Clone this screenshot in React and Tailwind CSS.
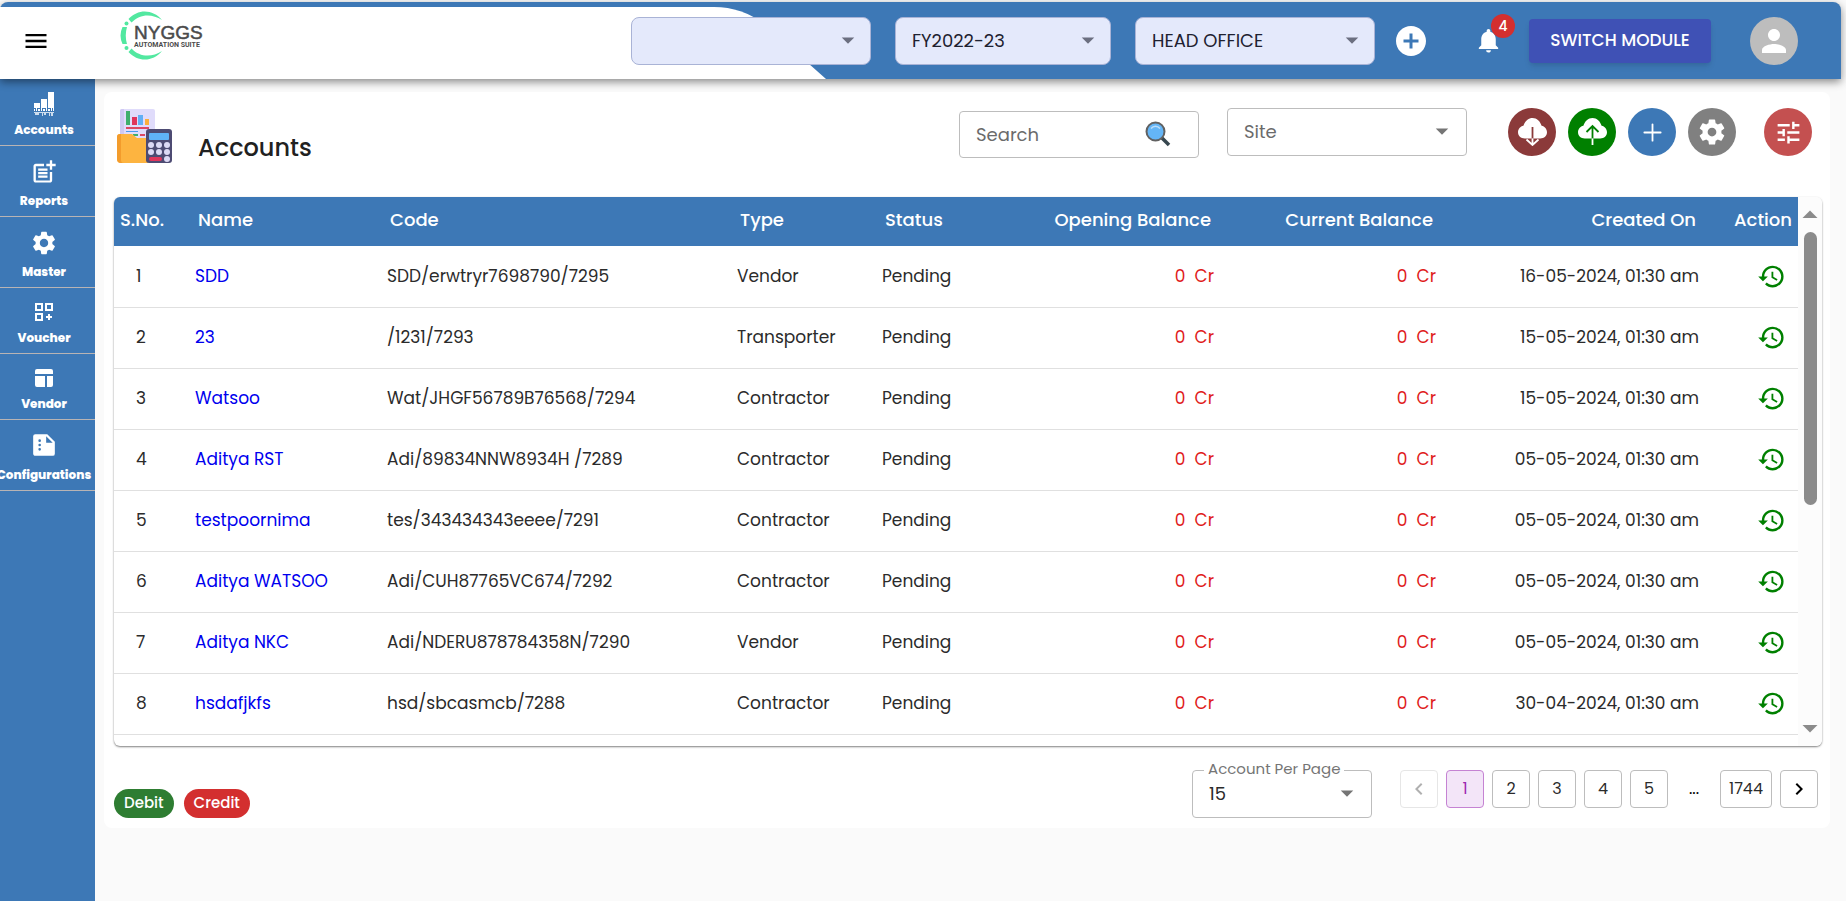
import { useState } from 'react';
import {
  MdMenu,
  MdPostAdd,
  MdSettings,
  MdAddCircle,
  MdNotifications,
  MdPerson,
  MdTune,
  MdHistory,
  MdNavigateBefore,
  MdNavigateNext,
  MdArrowDropDown,
  MdArrowDropUp,
} from 'react-icons/md';
import { IoAdd, IoSettingsSharp } from 'react-icons/io5';

const accounts = [
  { name: 'SDD', code: 'SDD/erwtryr7698790/7295', type: 'Vendor', createdOn: '16-05-2024, 01:30 am' },
  { name: '23', code: '/1231/7293', type: 'Transporter', createdOn: '15-05-2024, 01:30 am' },
  { name: 'Watsoo', code: 'Wat/JHGF56789B76568/7294', type: 'Contractor', createdOn: '15-05-2024, 01:30 am' },
  { name: 'Aditya RST', code: 'Adi/89834NNW8934H /7289', type: 'Contractor', createdOn: '05-05-2024, 01:30 am' },
  { name: 'testpoornima', code: 'tes/343434343eeee/7291', type: 'Contractor', createdOn: '05-05-2024, 01:30 am' },
  { name: 'Aditya WATSOO', code: 'Adi/CUH87765VC674/7292', type: 'Contractor', createdOn: '05-05-2024, 01:30 am' },
  { name: 'Aditya NKC', code: 'Adi/NDERU878784358N/7290', type: 'Vendor', createdOn: '05-05-2024, 01:30 am' },
  { name: 'hsdafjkfs', code: 'hsd/sbcasmcb/7288', type: 'Contractor', createdOn: '30-04-2024, 01:30 am' },
];

// Sidebar icons
const BarsIcon = () => (
  <svg width="24" height="26" viewBox="0 0 24 26" fill="currentColor" aria-hidden="true">
    <path d="M2 12h6v5H2zM9 8h6v9H9zM16 1h6v16h-6z" />
    <path d="M2 18h1v2H2zM4 17h1v3H4zM6 18h2v2H6zM9 17h1v3H9zM11 18h2v2h-2zM14 17h1v3h-1zM16 18h2v2h-2zM19 17h1v3h-1zM21 17h1v3h-1z" />
    <path d="M2 21h20v1H2zM3 22h4v2H3zM10 22h1v3h-1zM12 22h2v2h-2zM17 22h1v3h-1zM19 22h2v3h-2z" opacity=".75" />
  </svg>
);

const VoucherIcon = () => (
  <svg width="24" height="24" viewBox="0 0 24 24" fill="currentColor" aria-hidden="true">
    <path fillRule="evenodd" d="M3 3h8v8H3zm2 2v4h4V5zM13 3h8v8h-8zm2 2v4h4V5zM3 13h8v8H3zm2 2v4h4v-4z" />
    <path d="M16 14h2v2h2v2h-2v2h-2v-2h-2v-2h2z" />
  </svg>
);

const VendorIcon = () => (
  <svg width="24" height="24" viewBox="0 0 24 24" fill="currentColor" aria-hidden="true">
    <path d="M5 3h14a2 2 0 0 1 2 2v3H3V5a2 2 0 0 1 2-2zM3 10h10v11H5a2 2 0 0 1-2-2zM15 10h6v9a2 2 0 0 1-2 2h-4z" />
  </svg>
);

const ConfigIcon = () => (
  <svg width="26" height="26" viewBox="0 0 24 24" fill="currentColor" aria-hidden="true">
    <path
      fillRule="evenodd"
      d="M15 2H4a2 2 0 0 0-2 2v16c0 1.1.9 2 2 2h16a2 2 0 0 0 2-2V9zM8 17.200a1.200 1.200 0 1 1 0-2.400 1.200 1.200 0 0 1 0 2.400zM8 13.200a1.200 1.200 0 1 1 0-2.400 1.200 1.200 0 0 1 0 2.400zM8 9.200a1.200 1.200 0 1 1 0-2.400 1.200 1.200 0 0 1 0 2.400zM14 10V4l6 6z"
    />
  </svg>
);

const menuItems = [
  { label: 'Accounts', icon: <BarsIcon />, height: 'h-[67px]' },
  { label: 'Reports', icon: <MdPostAdd size={28} />, height: 'h-[71px]' },
  { label: 'Master', icon: <MdSettings size={28} />, height: 'h-[71px]' },
  { label: 'Voucher', icon: <VoucherIcon />, height: 'h-[66px]' },
  { label: 'Vendor', icon: <VendorIcon />, height: 'h-[66px]' },
  { label: 'Configurations', icon: <ConfigIcon />, height: 'h-[71px]' },
];

const Logo = () => (
  <svg width="90" height="52" viewBox="0 0 90 52" role="img" aria-label="NYGGS Automation Suite">
    <g fill="#52e8a0">
      <path d="M8.500 8C18-2.500 33-2 42 9 32 2.500 20 2.500 11.500 11.500z" />
      <path d="M8.500 41C18 51.500 33 51 42 40 32 46.500 20 46.500 11.500 37.500z" />
      <path d="M2.500 16h4.500q-2.500 8.500 0 17H2.500q-4-8.500 0-17z" />
      <circle cx="6.500" cy="12.500" r="2" />
      <circle cx="6.500" cy="37" r="2" />
    </g>
    <text x="14" y="28" fontSize="19" fill="#4b4b4b" stroke="#4b4b4b" strokeWidth=".5" fontFamily="Liberation Sans, sans-serif">NYGGS</text>
    <text x="14" y="36" fontSize="7" fontWeight="700" fill="#4b4b4b" fontFamily="Roboto, sans-serif">AUTOMATION SUITE</text>
  </svg>
);

const AccountsArt = () => (
  <svg width="56" height="56" viewBox="0 0 56 56" aria-hidden="true">
    <rect x="3" y="1" width="35" height="40" rx="2" fill="#e0dcfb" />
    <path d="M3 3a2 2 0 0 1 2-2h2v26H3z" fill="#cfc9f3" />
    <path d="M9 3h4v14H9z" fill="#3fae6c" />
    <path d="M15 9h5v8h-5z" fill="#e0355c" />
    <path d="M21 7h5v10h-5z" fill="#62b0f5" />
    <path d="M28 11h4v6h-4z" fill="#fbaf3a" />
    <path d="M9 19h23v2H9z" fill="#dc4764" />
    <path d="M9 23h12v1H9z" fill="#4a9bea" />
    <path d="M16 26h5v2h-5z" fill="#3fae6c" />
    <path d="M23 26h5v2h-5z" fill="#dc4764" />
    <path d="M0 29a3 3 0 0 1 3-3h12l5 4h11v25H4a4 4 0 0 1-4-4z" fill="#fdb440" />
    <path d="M0 29a3 3 0 0 1 3-3h1v26q0 3 3 3H4a4 4 0 0 1-4-4z" fill="#f39c2c" />
    <rect x="29" y="21" width="26" height="34" rx="3" fill="#4d4b73" />
    <rect x="32" y="25" width="20" height="7" rx="1" fill="#5fb2f7" />
    <g fill="#dcd9f5">
      <circle cx="34" cy="37" r="3" />
      <circle cx="42" cy="37" r="3" />
      <circle cx="50" cy="37" r="3" />
      <circle cx="34" cy="44" r="3" />
      <circle cx="42" cy="44" r="3" />
      <circle cx="50" cy="44" r="3" />
      <circle cx="50" cy="51" r="3" />
    </g>
    <rect x="32" y="49" width="13" height="4" rx="2" fill="#e0355c" />
  </svg>
);

const SearchIcon = () => (
  <svg width="26" height="26" viewBox="0 0 26 26" aria-hidden="true">
    <path d="m17 17 7 7" stroke="#37474f" strokeWidth="3.500" />
    <circle cx="10.500" cy="10.500" r="9" fill="#64b5f6" stroke="#616161" strokeWidth="2" />
    <path d="M6 7.500c2.500-3 6.500-3 9 0" fill="none" stroke="#bbdefb" strokeWidth="1.500" />
  </svg>
);

// Cloud with an arrow, shared by the download and upload buttons
const CloudIcon = ({ up, color }) => (
  <svg width="29" height="28" viewBox="0 0 29 28" fill="none" strokeWidth="1.800" aria-hidden="true">
    <path
      d="M6.800 20.500C2.800 20.500 0 18 0 14.300 0 11 2.300 8.300 5.400 7.800 6.800 3.300 10.200 0 14.500 0s7.700 3.300 9.100 7.800C26.700 8.300 29 11 29 14.300c0 3.700-2.800 6.200-6.800 6.200z"
      fill="#fff"
    />
    {up ? (
      <>
        <path d="M14.500 20.500V8.500M8.500 14l6-6 6 6" stroke={color} />
        <path d="M14.500 20.500v6.500" stroke="#fff" />
      </>
    ) : (
      <>
        <path d="M14.500 9v11.500" stroke={color} />
        <path d="M14.500 20.500V27M8.500 21.500l6 5.500 6-5.500" stroke="#fff" />
      </>
    )}
  </svg>
);

const HeaderSelect = ({ label, value, className }) => (
  <div className={`relative h-12 ${className}`}>
    <select
      aria-label={label}
      defaultValue={value}
      className="w-full h-full pl-4 pr-10 appearance-none rounded-lg border border-[#a9b3d6] bg-[#e4e9fb] text-lg text-[#1e2130]"
    >
      <option value={value}>{value}</option>
    </select>
    <MdArrowDropDown size={30} className="absolute right-2 top-2 text-[#6b6f80] pointer-events-none" />
  </div>
);

const TopBar = ({ onToggle }) => (
  <header className="relative z-20 mr-[5px] h-[77px] mt-0.5 flex items-center rounded-t-lg bg-[#3d78b6] shadow-[0_3px_8px_rgba(0,0,0,0.45)]">
    <div className="absolute inset-x-0 bottom-0 top-[5px]">
      <svg width="828" height="72" viewBox="0 0 828 72" aria-hidden="true">
        <path d="M0 0H714Q742 0 764 17L826 72H0z" fill="#fff" />
      </svg>
    </div>
    <div className="relative flex w-full items-center">
      <button type="button" aria-label="Toggle menu" onClick={onToggle} className="ml-[22px] w-7 text-black">
        <MdMenu size={28} />
      </button>
      <a href="#home" className="ml-[70px] mb-2">
        <Logo />
      </a>
      <div className="ml-auto flex items-center">
        <HeaderSelect label="Company" value="" className="w-60 mr-6" />
        <HeaderSelect label="Financial year" value="FY2022-23" className="w-[216px] mr-6" />
        <HeaderSelect label="Office" value="HEAD OFFICE" className="w-60 mr-[18px]" />
        <button type="button" aria-label="Add" className="mr-[45px] text-white">
          <MdAddCircle size={36} />
        </button>
        <button type="button" aria-label="Notifications" className="relative mr-[26px] text-white">
          <MdNotifications size={29} />
          <span className="absolute -right-3 -top-3 flex h-6 w-6 items-center justify-center rounded-full bg-[#d32f2f] text-sm font-medium">
            4
          </span>
        </button>
        <button
          type="button"
          className="mr-[39px] h-11 w-[182px] rounded bg-[#3f51b5] text-[17px] font-medium text-white shadow-md"
        >
          SWITCH MODULE
        </button>
        <button
          type="button"
          aria-label="Profile"
          className="mr-[43px] flex h-12 w-12 items-center justify-center rounded-full bg-[#bdbdbd] text-white"
        >
          <MdPerson size={36} />
        </button>
      </div>
    </div>
  </header>
);

const Sidebar = () => (
  <nav className="w-[95px] shrink-0 bg-[#3d78b6] text-white">
    {menuItems.map((item) => (
      <a
        key={item.label}
        href={`#${item.label.toLowerCase()}`}
        className={`flex flex-col items-center justify-between border-b border-[#b9b4b4] pt-3 pb-[5px] pr-[7px] text-xs leading-5 font-extrabold ${item.height}`}
      >
        {item.icon}
        {item.label}
      </a>
    ))}
  </nav>
);

const roundButton = 'flex h-12 w-12 items-center justify-center rounded-full text-white';

const PageHeader = () => (
  <div className="flex items-start">
    <div className="ml-[3px]">
      <AccountsArt />
    </div>
    <h1 className="ml-[25px] mt-6 text-2xl font-medium text-[#212121]">Accounts</h1>
    <div className="ml-auto flex items-start">
      <div className="relative mt-[3px] mr-7 h-[47px] w-60">
        <input
          type="text"
          aria-label="Search"
          placeholder="Search"
          className="h-full w-full rounded border border-[#bdbdbd] pl-4 pr-14 text-lg placeholder:text-[#6b6b6b]"
        />
        <button type="button" aria-label="Run search" className="absolute right-7 top-2.5">
          <SearchIcon />
        </button>
      </div>
      <div className="relative mr-[41px] h-12 w-60">
        <select
          aria-label="Site"
          defaultValue=""
          className="h-full w-full appearance-none rounded border border-[#bdbdbd] bg-white pl-4 text-lg text-[#6b6b6b]"
        >
          <option value="">Site</option>
        </select>
        <MdArrowDropDown size={30} className="absolute right-2.5 top-2 text-[#757575] pointer-events-none" />
      </div>
      <div className="flex gap-3">
        <button type="button" aria-label="Download" className={`${roundButton} bg-[#8b3a3a]`}>
          <CloudIcon color="#8b3a3a" />
        </button>
        <button type="button" aria-label="Upload" className={`${roundButton} bg-[#008000]`}>
          <CloudIcon up color="#008000" />
        </button>
        <button type="button" aria-label="Add account" className={`${roundButton} bg-[#3d78b6]`}>
          <IoAdd size={29} />
        </button>
        <button type="button" aria-label="Settings" className={`${roundButton} bg-[#808080]`}>
          <IoSettingsSharp size={28} />
        </button>
      </div>
      <button type="button" aria-label="Filters" className={`${roundButton} ml-7 mr-2.5 bg-[#c45050]`}>
        <MdTune size={29} />
      </button>
    </div>
  </div>
);

const AccountsTable = () => (
  <div className="mt-[33px] flex h-[549px] overflow-hidden rounded-md shadow-[0_1px_2px_rgba(0,0,0,0.5)]">
    <div className="min-w-0 flex-1 overflow-hidden">
      <table className="w-full table-fixed text-[17px] text-[#2b2b2b]">
        <colgroup>
          <col className="w-[73px]" />
          <col className="w-48" />
          <col className="w-[350px]" />
          <col className="w-[145px]" />
          <col className="w-[130px]" />
          <col />
          <col className="w-[222px]" />
          <col className="w-[263px]" />
          <col className="w-[91px]" />
        </colgroup>
        <thead>
          <tr className="h-[49px] bg-[#3d78b6] text-left text-lg text-white *:pb-1 *:font-medium">
            <th className="pl-1.5">S.No.</th>
            <th className="pl-[11px]">Name</th>
            <th className="pl-[11px]">Code</th>
            <th className="pl-[11px]">Type</th>
            <th className="pl-[11px]">Status</th>
            <th className="pr-[11px] text-right">Opening Balance</th>
            <th className="pr-[11px] text-right">Current Balance</th>
            <th className="pr-[11px] text-right">Created On</th>
            <th className="pr-1.5 text-right">Action</th>
          </tr>
        </thead>
        <tbody>
          {accounts.map((account, index) => (
            <tr key={account.code} className="h-[61px] border-b border-[#e0e0e0]">
              <td className="pl-[22px]">{index + 1}</td>
              <td className="pl-2">
                <a href={`#account-${index + 1}`} className="text-[#0000ee]">{account.name}</a>
              </td>
              <td className="pl-2">{account.code}</td>
              <td className="pl-2">{account.type}</td>
              <td className="pl-2">Pending</td>
              <td className="pr-2 text-right text-[#e01b1b]">0&nbsp; Cr</td>
              <td className="pr-2 text-right text-[#e01b1b]">0&nbsp; Cr</td>
              <td className="pr-2 text-right">{account.createdOn}</td>
              <td className="pr-3">
                <button type="button" aria-label={`History of ${account.name}`} className="ml-auto block text-[#008000]">
                  <MdHistory size={29} />
                </button>
              </td>
            </tr>
          ))}
        </tbody>
      </table>
    </div>
    {/* Scrollbar */}
    <div className="flex w-6 flex-col items-center bg-[#fcfcfc] text-[#8b8b8b]">
      <MdArrowDropUp size={36} />
      <div className="-mt-px h-[273px] w-[13px] shrink-0 rounded-full bg-[#8b8b8b]" />
      <MdArrowDropDown size={36} className="mt-auto" />
    </div>
  </div>
);

const pageButton = 'flex h-[38px] min-w-[38px] items-center justify-center rounded border text-base';

const TableFooter = () => {
  const [page, setPage] = useState(1);

  return (
    <div className="flex items-end justify-between">
      <div className="flex gap-2.5 text-[15px] font-medium text-white">
        <span className="flex h-[29px] items-center rounded-full bg-[#2e7d32] px-2.5">Debit</span>
        <span className="flex h-[29px] items-center rounded-full bg-[#d32f2f] px-2.5">Credit</span>
      </div>
      <div className="mt-6 mr-1 flex items-start">
        <div className="relative mr-7 h-12 w-[180px]">
          <label htmlFor="per-page" className="absolute left-3 -top-3 whitespace-nowrap bg-white px-1 text-[15px] text-[#757575]">
            Account Per Page
          </label>
          <select
            id="per-page"
            defaultValue="15"
            className="h-full w-full appearance-none rounded border border-[#bdbdbd] pl-4 text-lg text-[#2b2b2b]"
          >
            <option value="15">15</option>
          </select>
          <MdArrowDropDown size={30} className="absolute right-2.5 top-2 text-[#757575] pointer-events-none" />
        </div>
        <div className="flex gap-2">
          <button type="button" disabled aria-label="Previous page" className={`${pageButton} border-[#e6e6e6] text-[#b0b0b0]`}>
            <MdNavigateBefore size={24} />
          </button>
          {[1, 2, 3, 4, 5].map((number) => (
            <button
              key={number}
              type="button"
              onClick={() => setPage(number)}
              className={`${pageButton} ${page === number ? 'border-[#c583d3] bg-[#f3e5f8] text-[#9c27b0]' : 'border-[#bdbdbd] text-[#2b2b2b]'}`}
            >
              {number}
            </button>
          ))}
          <span className="flex h-[38px] w-9 items-center justify-center text-base">...</span>
          <button type="button" onClick={() => setPage(1744)} className={`${pageButton} px-2 border-[#bdbdbd] text-[#2b2b2b]`}>
            1744
          </button>
          <button type="button" aria-label="Next page" className={`${pageButton} border-[#bdbdbd] text-black`}>
            <MdNavigateNext size={24} />
          </button>
        </div>
      </div>
    </div>
  );
};

const App = () => {
  const [isOpen, setIsOpen] = useState(true);

  return (
    <div className="flex min-h-screen flex-col bg-[#fafafa] font-['Poppins','Inter',sans-serif]">
      <TopBar onToggle={() => setIsOpen(!isOpen)} />
      <div className="flex flex-1">
        {isOpen && <Sidebar />}
        <main className="min-w-0 flex-1 pt-[13px] pr-4 pl-[9px]">
          <div className="rounded-lg bg-white pl-2.5 pr-2 pt-4 pb-2.5">
            <PageHeader />
            <AccountsTable />
            <TableFooter />
          </div>
        </main>
      </div>
    </div>
  );
};

export default App;
